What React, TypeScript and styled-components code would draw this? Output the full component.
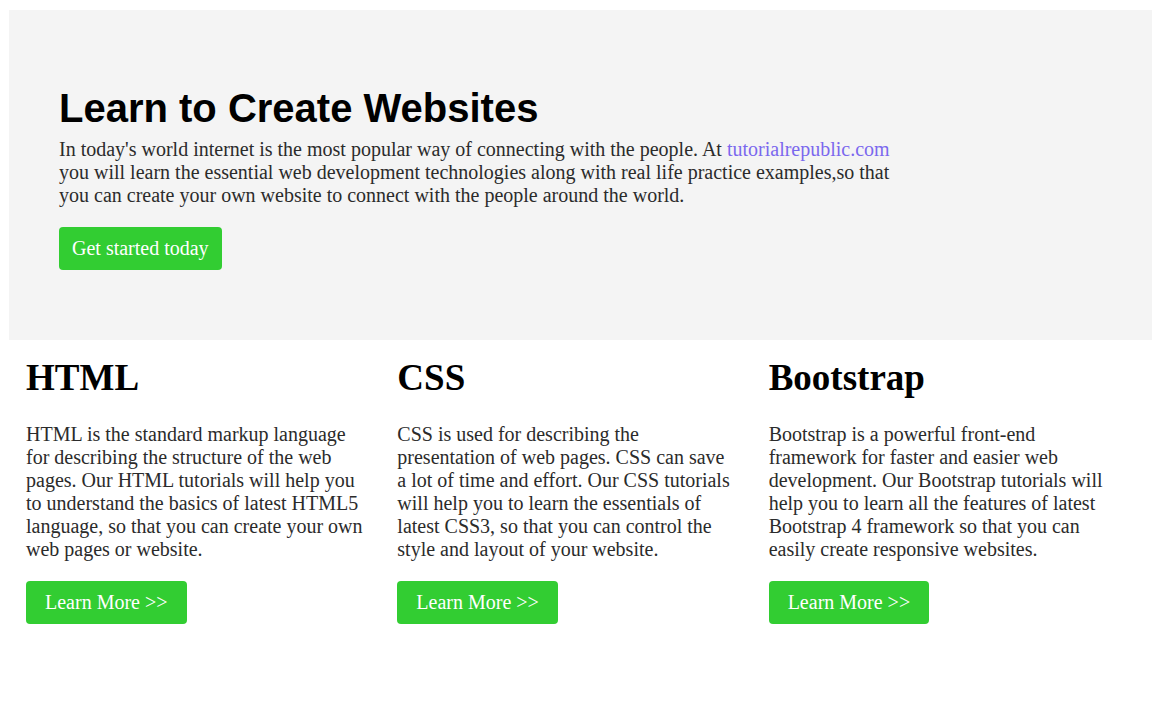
import React from "react";
import styled, { createGlobalStyle } from "styled-components";

const GlobalStyle = createGlobalStyle`
  html, body { margin: 0; padding: 0; background: #ffffff; }
  body { font-family: "Liberation Serif", "Times New Roman", serif; color: #333333; }
`;

const Page = styled.div`
  padding: 10px 13px 40px 9px;
`;

const Hero = styled.section`
  background: #f4f4f4;
  padding: 75px 50px 70px 50px;
`;

const HeroTitle = styled.h1`
  margin: 0 0 7px 0;
  font-family: "Liberation Sans", Arial, sans-serif;
  font-weight: 700;
  font-size: 40px;
  line-height: 46px;
  color: #000000;
`;

const HeroText = styled.p`
  margin: 0 0 20px 0;
  max-width: 845px;
  font-size: 20px;
  line-height: 23px;
  color: #2b2b2b;
`;

const Link = styled.a`
  color: #7b68ee;
  text-decoration: none;
`;

const GreenButton = styled.a<{ $px: number }>`
  display: inline-block;
  box-sizing: border-box;
  height: 43px;
  background: #32cd32;
  color: #ffffff;
  font-family: "Liberation Serif", "Times New Roman", serif;
  font-size: 20px;
  line-height: 21px;
  padding: 11px ${(p) => p.$px}px;
  border-radius: 4px;
  text-decoration: none;
`;

const Columns = styled.section`
  display: grid;
  grid-template-columns: repeat(3, 1fr);
  padding: 17px 12px 0 17px;
`;

const Column = styled.article`
  padding-right: 34px;
`;

const ColTitle = styled.h2`
  margin: 0 0 24px 0;
  font-family: "Liberation Serif", "Times New Roman", serif;
  font-weight: 700;
  font-size: 37px;
  line-height: 42px;
  color: #000000;
`;

const ColText = styled.p`
  margin: 0 0 20px 0;
  font-size: 20px;
  line-height: 23px;
  color: #2b2b2b;
`;

const items = [
  {
    title: "HTML",
    text: "HTML is the standard markup language for describing the structure of the web pages. Our HTML tutorials will help you to understand the basics of latest HTML5 language, so that you can create your own web pages or website.",
  },
  {
    title: "CSS",
    text: "CSS is used for describing the presentation of web pages. CSS can save a lot of time and effort. Our CSS tutorials will help you to learn the essentials of latest CSS3, so that you can control the style and layout of your website.",
  },
  {
    title: "Bootstrap",
    text: "Bootstrap is a powerful front-end framework for faster and easier web development. Our Bootstrap tutorials will help you to learn all the features of latest Bootstrap 4 framework so that you can easily create responsive websites.",
  },
];

export default function App() {
  return (
    <Page>
      <GlobalStyle />
      <Hero>
        <HeroTitle>Learn to Create Websites</HeroTitle>
        <HeroText>
          In today's world internet is the most popular way of connecting with the people. At{" "}
          <Link href="#">tutorialrepublic.com</Link> you will learn the essential web development
          technologies along with real life practice examples,so that you can create your own
          website to connect with the people around the world.
        </HeroText>
        <GreenButton href="#" $px={13}>Get started today</GreenButton>
      </Hero>
      <Columns>
        {items.map((it) => (
          <Column key={it.title}>
            <ColTitle>{it.title}</ColTitle>
            <ColText>{it.text}</ColText>
            <GreenButton href="#" $px={19}>Learn More &gt;&gt;</GreenButton>
          </Column>
        ))}
      </Columns>
    </Page>
  );
}
